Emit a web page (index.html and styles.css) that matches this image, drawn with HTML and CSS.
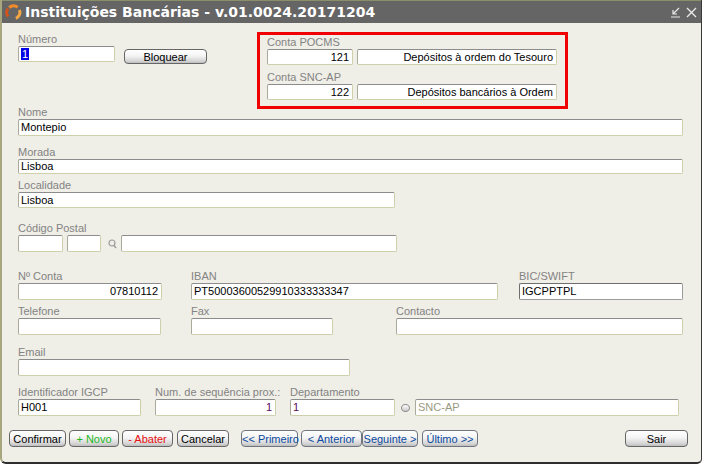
FILE: index.html
```html
<!DOCTYPE html>
<html lang="pt">
<head>
<meta charset="utf-8">
<title>Instituições Bancárias</title>
<link rel="stylesheet" href="styles.css">
</head>
<body>
<div class="window">
  <div class="titlebar">
    <svg class="app-icon" width="17" height="17" viewBox="0 0 17 17">
      <path d="M4.2 3.6 A6.2 6.2 0 0 1 12.6 3.4" fill="none" stroke="#f08a2a" stroke-width="3"/>
      <path d="M3.2 12.6 A6.2 6.2 0 0 1 3.1 4.6" fill="none" stroke="#d2541c" stroke-width="3"/>
      <path d="M14.4 6 A6.2 6.2 0 0 1 10.8 14.3" fill="none" stroke="#f5a544" stroke-width="3"/>
    </svg>
    <span class="title">Instituições Bancárias - v.01.0024.20171204</span>
    <div class="controls">
      <svg width="11" height="11" viewBox="0 0 11 11"><path d="M9 1 L3 7 M3 3 V7 H7 M1 10 H10" fill="none" stroke="#e8e8e8" stroke-width="1.2"/></svg>
      <svg width="11" height="11" viewBox="0 0 11 11"><path d="M1 1 L10 10 M10 1 L1 10" fill="none" stroke="#e8e8e8" stroke-width="1.4"/></svg>
    </div>
  </div>

  <div class="content">
    <div class="row row-top">
      <div class="field f-numero">
        <label>Número</label>
        <div class="input w-numero h16"><span class="sel">1</span></div>
      </div>
      <button class="btn btn-bloquear">Bloquear</button>
      <div class="highlight">
        <label>Conta POCMS</label>
        <div class="pair">
          <div class="input w-conta h16 right">121</div>
          <div class="input w-desc h16 right">Depósitos à ordem do Tesouro</div>
        </div>
        <label class="lbl-second">Conta SNC-AP</label>
        <div class="pair">
          <div class="input w-conta h16 right">122</div>
          <div class="input w-desc h16 right">Depósitos bancários à Ordem</div>
        </div>
      </div>
    </div>

    <div class="field row-nome">
      <label>Nome</label>
      <div class="input w-full">Montepio</div>
    </div>

    <div class="field row-morada">
      <label>Morada</label>
      <div class="input w-full h15">Lisboa</div>
    </div>

    <div class="field row-localidade">
      <label>Localidade</label>
      <div class="input w-local h16">Lisboa</div>
    </div>

    <div class="field row-postal">
      <label>Código Postal</label>
      <div class="postal">
        <div class="input w-cp1"></div>
        <div class="input w-cp2"></div>
        <svg class="lupa" width="9" height="10" viewBox="0 0 9 10"><circle cx="4" cy="4" r="3" fill="none" stroke="#9a9a9a" stroke-width="1.2"/><path d="M6 6.5 L8 9" stroke="#9a9a9a" stroke-width="1.4"/></svg>
        <div class="input w-cp3"></div>
      </div>
    </div>

    <div class="row row-conta">
      <div class="field"><label>Nº Conta</label><div class="input w-nconta right">07810112</div></div>
      <div class="field g-iban"><label>IBAN</label><div class="input w-iban">PT50003600529910333333347</div></div>
      <div class="field g-bic"><label>BIC/SWIFT</label><div class="input w-bic focus">IGCPPTPL</div></div>
    </div>

    <div class="row row-tel">
      <div class="field"><label>Telefone</label><div class="input w-tel"></div></div>
      <div class="field g-fax"><label>Fax</label><div class="input w-fax"></div></div>
      <div class="field g-contacto"><label>Contacto</label><div class="input w-contacto"></div></div>
    </div>

    <div class="field row-email">
      <label>Email</label>
      <div class="input w-email"></div>
    </div>

    <div class="row row-igcp">
      <div class="field"><label>Identificador IGCP</label><div class="input w-igcp">H001</div></div>
      <div class="field g-seq"><label>Num. de sequência prox.:</label><div class="input w-seq right purple">1</div></div>
      <div class="field g-dep">
        <label>Departamento</label>
        <div class="dep">
          <div class="input w-dep purple">1</div>
          <span class="radio"></span>
          <div class="input w-snc muted">SNC-AP</div>
        </div>
      </div>
    </div>

    <div class="buttons">
      <button class="btn w-confirmar">Confirmar</button>
      <button class="btn w-novo green">+ Novo</button>
      <button class="btn w-abater red">- Abater</button>
      <button class="btn w-cancelar">Cancelar</button>
      <button class="btn nav w-primeiro">&lt;&lt; Primeiro</button>
      <button class="btn nav w-anterior">&lt; Anterior</button>
      <button class="btn nav w-seguinte">Seguinte &gt;</button>
      <button class="btn nav w-ultimo">Último &gt;&gt;</button>
      <button class="btn w-sair">Sair</button>
    </div>
  </div>
</div>
</body>
</html>
```

FILE: styles.css
```css
* { box-sizing: border-box; }
html, body { margin: 0; padding: 0; background: #ffffff; }
body { font-family: "Liberation Sans", Arial, sans-serif; font-size: 11px; color: #000; }

.btn {
  flex: none;
  height: 17px;
  padding: 0;
  margin: 0 0 0 3px;
  font-family: "Liberation Sans", Arial, sans-serif;
  font-size: 11px;
  color: #000;
  border: 1px solid #666;
  border-radius: 4px;
  background: linear-gradient(#ffffff 0%, #f4f4f4 45%, #d4d4d4 85%, #bdbdbd 100%);
  line-height: 14px;
  white-space: nowrap;
}

.window {
  width: 702px;
  height: 464px;
  background: #efeee7;
  border-left: 2px solid #a8a67c;
  border-right: 1px solid #3a3a3a;
  border-bottom: 2px solid #2e2e2e;
  border-bottom-left-radius: 6px;
  border-bottom-right-radius: 5px;
  overflow: hidden;
}

.titlebar {
  height: 23px;
  background: #656565;
  display: flex;
  align-items: center;
  padding-left: 3px;
  color: #fff;
  border-top: 1px solid #8a8f6a;
}
.app-icon { margin-right: 3px; flex: none; }
.title {
  font-family: "DejaVu Sans", Verdana, sans-serif;
  font-weight: bold;
  font-size: 14px;
  white-space: nowrap;
}
.controls { margin-left: auto; display: flex; gap: 5px; padding-right: 4px; padding-top: 1px; }

.content { padding-left: 16px; }

.field { flex: none; }

label {
  display: block;
  height: 13px;
  line-height: 13px;
  font-size: 11px;
  color: #838383;
  white-space: nowrap;
}

.input {
  height: 17px;
  background: #fff;
  border: 1px solid #cdd0aa;
  border-top-color: #8c8c8c;
  border-left-color: #a9aa9c;
  border-radius: 2px;
  font-size: 11px;
  line-height: 15px;
  padding: 0 3px 0 2px;
  white-space: nowrap;
  overflow: hidden;
}
.h16 { height: 16px; line-height: 14px; }
.h15 { height: 15px; line-height: 13px; }
.right { text-align: right; }
.purple { color: #5a0a5a; }
.muted { color: #9a9a82; }
.focus { border-color: #9c9c9c; border-top-color: #6e6e6e; border-left-color: #6e6e6e; }

.sel { background: #0000e6; color: #fff; padding: 0 1px; }

.row { display: flex; align-items: flex-start; }

.row-top { margin-top: 9px; height: 77px; }
.f-numero { margin-top: 1px; }
.w-numero { width: 97px; }
.btn.btn-bloquear { width: 83px; height: 15px; margin: 17px 0 0 9px; }

.highlight {
  margin-left: 50px;
  width: 311px;
  height: 77px;
  border: 3px solid #f00000;
  padding: 1px 0 0 7px;
}
.pair { display: flex; gap: 4px; }
.w-conta { width: 86px; }
.w-desc { width: 200px; }
.lbl-second { margin-top: 6px; }

.row-nome { margin-top: -3px; }
.w-full { width: 665px; }
.row-morada { margin-top: 10px; }
.row-localidade { margin-top: 5px; }
.w-local { width: 377px; }

.row-postal { margin-top: 14px; }
.postal { display: flex; align-items: center; }
.w-cp1 { width: 45px; }
.w-cp2 { width: 34px; margin-left: 4px; }
.lupa { margin: 1px 4px 0 7px; }
.w-cp3 { width: 276px; }

.row-conta { margin-top: 18px; }
.w-nconta { width: 144px; }
.g-iban { margin-left: 29px; }
.w-iban { width: 307px; }
.g-bic { margin-left: 21px; }
.w-bic { width: 164px; }

.row-tel { margin-top: 5px; }
.w-tel { width: 143px; }
.g-fax { margin-left: 30px; }
.w-fax { width: 142px; }
.g-contacto { margin-left: 63px; }
.w-contacto { width: 287px; }

.row-email { margin-top: 11px; }
.w-email { width: 332px; }

.row-igcp { margin-top: 10px; }
.w-igcp { width: 123px; }
.g-seq { margin-left: 14px; width: 121px; }
.w-seq { width: 121px; }
.g-dep { margin-left: 14px; }
.dep { display: flex; align-items: center; }
.w-dep { width: 105px; }
.radio {
  width: 9px; height: 8px;
  margin: 0 5px 0 6px;
  border: 1px solid #8c8c8c;
  border-radius: 50%;
  background: linear-gradient(#ffffff, #c8c8c8);
}
.w-snc { width: 264px; }

.buttons { display: flex; margin-top: 14px; margin-left: -9px; }

.btn:first-child { margin-left: 0; }
.green { color: #23b823; }
.red { color: #e81010; }
.btn.nav { color: #0b4a9e; border-color: #6f7680; }
.btn.w-confirmar { width: 57px; }
.btn.w-novo { width: 50px; }
.btn.w-abater { width: 51px; }
.btn.w-cancelar { width: 52px; margin-left: 4px; }
.btn.w-primeiro { width: 57px; margin-left: 12px; }
.btn.w-anterior { width: 61px; }
.btn.w-seguinte { width: 56px; margin-left: 0; }
.btn.w-ultimo { width: 56px; margin-left: 4px; }
.btn.w-sair { width: 63px; margin-left: 147px; }
```
